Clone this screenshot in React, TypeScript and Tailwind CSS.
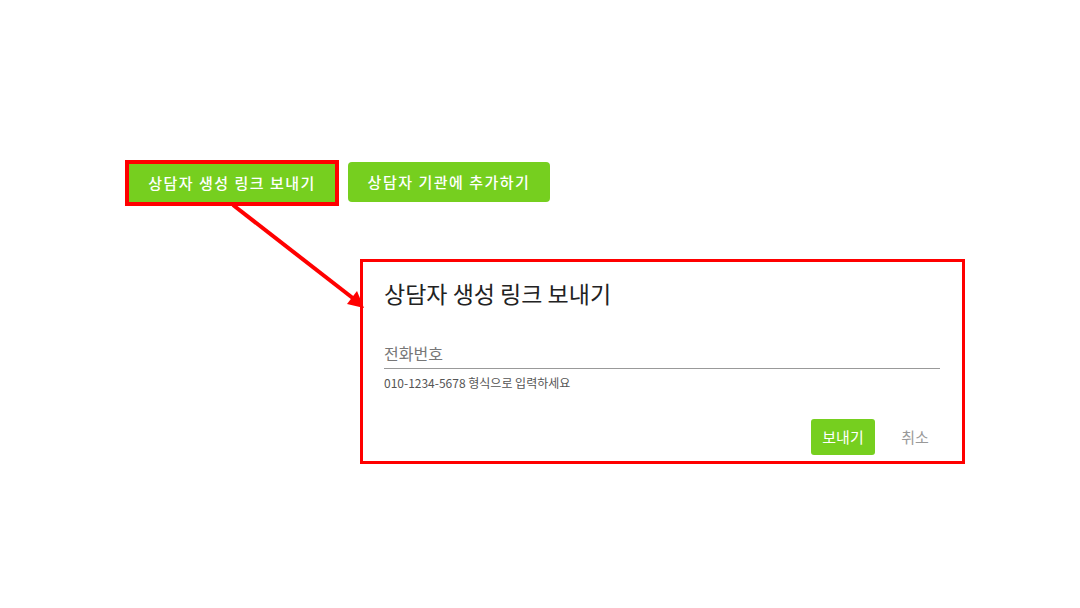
import React from "react";

export default function App() {
  return (
    <div
      className="relative w-full h-[608px] bg-white overflow-hidden"
      style={{ fontFamily: '"Noto Sans CJK KR", "Noto Sans", sans-serif' }}
    >
      <div className="pt-[160px] pl-[125px]">
        <div className="flex items-center">
          <div className="border-4 border-[#ff0000]">
            <button className="w-[206px] h-[38px] bg-[#76cf1f] text-white text-[15px] font-medium tracking-[1.5px] flex items-center justify-center">
              상담자 생성 링크 보내기
            </button>
          </div>
          <button className="ml-[9px] -mt-[2px] w-[202px] h-[40px] rounded-[4px] bg-[#76cf1f] text-white text-[15px] font-medium tracking-[1.5px] flex items-center justify-center">
            상담자 기관에 추가하기
          </button>
        </div>
        <div className="mt-[53px] ml-[235px] w-[605px] h-[205px] border-[3px] border-[#ff0000] flex flex-col">
          <div className="pt-[16px] pl-[21px] pr-[22px]">
            <div className="h-[30px] leading-[30px] text-[23px] text-[#222]">
              상담자 생성 링크 보내기
            </div>
            <div className="mt-[34px] border-b border-[#999] pb-[4px]">
              <div className="h-[22px] leading-[22px] text-[16px] text-[#777]">전화번호</div>
            </div>
            <div className="mt-[6px] h-[16px] leading-[16px] text-[12px] text-[#555]">
              010-1234-5678 형식으로 입력하세요
            </div>
          </div>
          <div className="mt-[28px] flex justify-end gap-[8px] pr-[15px]">
            <button className="w-[64px] h-[36px] rounded-[3px] bg-[#76cf1f] text-white text-[15px] flex items-center justify-center">
              보내기
            </button>
            <button className="w-[64px] h-[36px] text-[#999] text-[15px] flex items-center justify-center">
              취소
            </button>
          </div>
        </div>
      </div>
      <svg
        className="absolute left-0 top-0 pointer-events-none"
        width="1080"
        height="608"
        viewBox="0 0 1080 608"
      >
        <line x1="233" y1="205" x2="354" y2="299" stroke="#ff0000" strokeWidth="4" />
        <polygon points="364,308 347,304 357,291" fill="#ff0000" />
      </svg>
    </div>
  );
}
